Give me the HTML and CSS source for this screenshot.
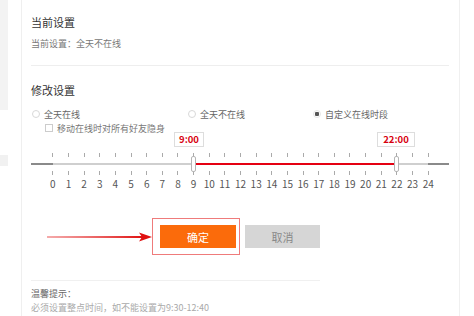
FILE: index.html
```html
<!DOCTYPE html>
<html lang="zh-CN">
<head>
    <meta charset="UTF-8">
    <meta name="viewport" content="width=device-width, initial-scale=1.0">
    <title>在线时段设置</title>
    <link rel="stylesheet" href="styles.css">
</head>
<body>
    <div class="page">
        <div class="sidebar">
            <div class="side-block"></div>
            <div class="side-tab"></div>
        </div>
        <div class="panel">
            <h3 class="section-title">当前设置</h3>
            <p class="current">当前设置：全天不在线</p>
            <div class="divider"></div>

            <h3 class="section-title mt">修改设置</h3>
            <div class="options">
                <label class="option opt-1"><span class="radio"></span>全天在线</label>
                <label class="option opt-2"><span class="radio"></span>全天不在线</label>
                <label class="option"><span class="radio checked"></span>自定义在线时段</label>
            </div>
            <label class="hide-row"><span class="checkbox"></span>移动在线时对所有好友隐身</label>

            <div class="slider">
                <div class="slider-labels">
                    <span class="time-label start">9:00</span>
                    <span class="time-label end">22:00</span>
                </div>
                <div class="scale ticks">
                    <span></span><span></span><span></span><span></span><span></span>
                    <span></span><span></span><span></span><span></span><span></span>
                    <span></span><span></span><span></span><span></span><span></span>
                    <span></span><span></span><span></span><span></span><span></span>
                    <span></span><span></span><span></span><span></span><span></span>
                </div>
                <div class="track">
                    <span class="handle start"></span>
                    <span class="handle end"></span>
                </div>
                <div class="scale ticks">
                    <span></span><span></span><span></span><span></span><span></span>
                    <span></span><span></span><span></span><span></span><span></span>
                    <span></span><span></span><span></span><span></span><span></span>
                    <span></span><span></span><span></span><span></span><span></span>
                    <span></span><span></span><span></span><span></span><span></span>
                </div>
                <div class="scale numbers">
                    <span>0</span><span>1</span><span>2</span><span>3</span><span>4</span>
                    <span>5</span><span>6</span><span>7</span><span>8</span><span>9</span>
                    <span>10</span><span>11</span><span>12</span><span>13</span><span>14</span>
                    <span>15</span><span>16</span><span>17</span><span>18</span><span>19</span>
                    <span>20</span><span>21</span><span>22</span><span>23</span><span>24</span>
                </div>
            </div>

            <div class="actions">
                <svg class="arrow" width="105" height="12" viewBox="0 0 105 12">
                    <defs>
                        <linearGradient id="fade" gradientUnits="userSpaceOnUse" x1="0" y1="0" x2="97" y2="0">
                            <stop offset="0" stop-color="#e84545" stop-opacity="0.45"/>
                            <stop offset="1" stop-color="#e01010"/>
                        </linearGradient>
                    </defs>
                    <rect x="0" y="5" width="97" height="2" fill="url(#fade)"/>
                    <polygon points="92,1.5 105,6 92,10.5 95,6" fill="#e01010"/>
                </svg>
                <div class="highlight">
                    <button class="btn btn-ok">确定</button>
                </div>
                <button class="btn btn-cancel">取消</button>
            </div>
            <div class="divider short"></div>

            <p class="tip-title">温馨提示：</p>
            <p class="tip">必须设置整点时间，如不能设置为9:30-12:40</p>
        </div>
    </div>
</body>
</html>
```

FILE: styles.css
```css
body {
    margin: 0;
    font-family: "Noto Sans CJK SC", "Noto Sans", sans-serif;
    background-color: #fff;
    color: #333;
}
.page {
    display: flex;
    height: 316px;
    overflow: hidden;
}
.sidebar {
    width: 8px;
    margin-right: 13px;
}
.side-block {
    height: 110px;
    background-color: #f3f3f3;
}
.side-tab {
    height: 11px;
    margin-top: 45px;
    background-color: #f1f1f1;
}
.panel {
    width: 418px;
    padding: 14px 10px 0 9px;
    border-left: 1px solid #efefef;
    border-right: 1px solid #f0f0f0;
}
.section-title {
    margin: 0;
    font-size: 11px;
    line-height: 16px;
    font-weight: normal;
    color: #333;
}
.section-title.mt {
    margin-top: 16px;
}
.current {
    margin: 7px 0 0;
    font-size: 9px;
    line-height: 14px;
    color: #777;
}
.divider {
    height: 1px;
    margin-top: 14px;
    background-color: #eee;
}
.divider.short {
    width: 289px;
    margin-top: 25px;
    background-color: #f0f0f0;
}
.options {
    display: flex;
    align-items: center;
    height: 14px;
    margin-top: 9px;
    font-size: 9px;
    color: #666;
}
.option {
    display: flex;
    align-items: center;
    gap: 4px;
}
.opt-1 {
    width: 156px;
}
.opt-2 {
    width: 125px;
}
.radio {
    width: 6px;
    height: 6px;
    margin-left: 1px;
    border: 1px solid #d8d8d8;
    border-radius: 50%;
}
.radio.checked {
    border-color: #e6e6e6;
    background: radial-gradient(circle, #555 0 2px, transparent 2.5px);
}
.hide-row {
    display: flex;
    align-items: center;
    gap: 4px;
    height: 12px;
    margin: 1px 0 0 14px;
    font-size: 9px;
    color: #777;
}
.checkbox {
    width: 6px;
    height: 6px;
    border: 1px solid #ccc;
}

/* 时间轴 */
.slider {
    margin-top: -2px;
}
.slider-labels {
    position: relative;
    height: 15px;
    margin-bottom: 6px;
}
.time-label {
    position: absolute;
    top: 0;
    height: 13px;
    border: 1px solid #ddd;
    background-color: #fff;
    color: #d7000f;
    font-size: 9.5px;
    font-weight: bold;
    line-height: 13px;
    text-align: center;
}
.time-label.start {
    left: 143px;
    width: 28px;
}
.time-label.end {
    left: 346px;
    width: 36px;
}
.scale {
    display: flex;
    padding: 0 13px 0 14px;
}
.scale span {
    flex: 1;
    text-align: center;
}
.ticks {
    height: 4px;
}
.ticks span {
    display: flex;
    justify-content: center;
}
.ticks span::after {
    content: '';
    width: 1px;
    height: 4px;
    background-color: #aaa;
}
.track {
    position: relative;
    height: 2px;
    margin: 6px 0;
    background: linear-gradient(to right,
        #8a8a8a 0 21.8px,
        #cfcfcf 21.8px 162.6px,
        #e50012 162.6px 365.9px,
        #cfcfcf 365.9px 397.2px,
        #8a8a8a 397.2px);
}
.handle {
    position: absolute;
    top: -7px;
    width: 3px;
    height: 14px;
    border: 1px solid #b5b5b5;
    border-radius: 2px;
    background-color: #fff;
}
.handle.start {
    left: 160px;
}
.handle.end {
    left: 363px;
}
.numbers {
    margin-top: 4px;
    font-size: 10px;
    line-height: 10px;
    color: #555;
}

/* 按钮 */
.actions {
    display: flex;
    align-items: center;
    margin-top: 29px;
}
.arrow {
    display: block;
    margin-left: 16px;
}
.highlight {
    padding: 6px 3px 6px 7px;
    border: 1px solid #ef7b7b;
}
.btn {
    display: block;
    width: 76px;
    height: 23px;
    padding: 0;
    border: 0;
    font-family: inherit;
    font-size: 11px;
}
.btn-ok {
    background-color: #fb6b0b;
    color: #fff;
}
.btn-cancel {
    width: 75px;
    margin-left: 5px;
    background-color: #d6d6d6;
    color: #888;
}
.tip-title {
    margin: 6px 0 0;
    font-size: 9px;
    line-height: 14px;
    color: #666;
}
.tip {
    margin: 0;
    font-size: 9px;
    line-height: 14px;
    color: #aaa;
}
```
